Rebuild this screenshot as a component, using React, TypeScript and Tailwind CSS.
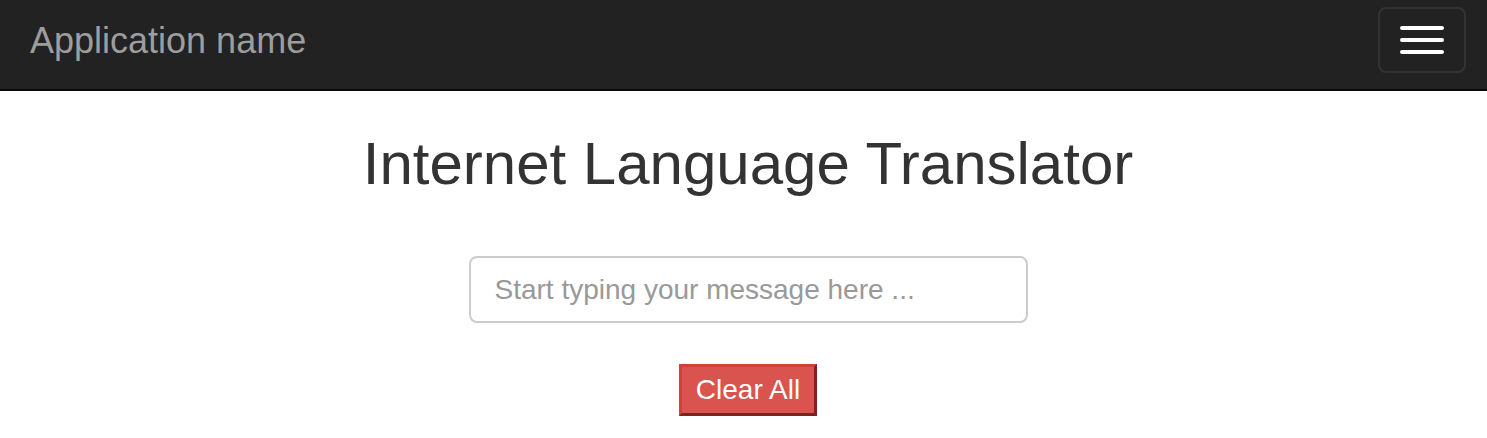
import React from "react";

export default function App() {
  return (
    <div className="min-h-[438px] bg-white" style={{ fontFamily: '"Liberation Sans", Arial, sans-serif' }}>
      <nav className="h-[91px] bg-[#222222] border-b-2 border-[#080808] flex items-start justify-between">
        <div className="pl-[30px] pt-[23px] text-[36px] leading-[36px] text-[#9d9d9d]">Application name</div>
        <button className="mt-[7px] mr-[21px] w-[88px] h-[66px] rounded-[8px] border-2 border-[#333333] flex flex-col items-center justify-center gap-[8px]">
          <span className="block w-[44px] h-[4px] rounded-[2px] bg-white" />
          <span className="block w-[44px] h-[4px] rounded-[2px] bg-white" />
          <span className="block w-[44px] h-[4px] rounded-[2px] bg-white" />
        </button>
      </nav>
      <div className="flex flex-col items-center pl-[9px]">
        <h1 className="mt-[40px] text-[60px] leading-[66px] text-[#333333] font-normal">Internet Language Translator</h1>
        <input
          className="mt-[59px] w-[559px] h-[67px] rounded-[8px] border-2 border-[#cccccc] px-[24px] text-[28px] text-[#555] placeholder:text-[#999999] outline-none"
          placeholder="Start typing your message here ..."
        />
        <button className="mt-[41px] w-[138px] h-[52px] bg-[#d9534f] text-white text-[28px] leading-none border-[3px] border-t-[#d43f3a] border-l-[#d43f3a] border-b-[#7f2321] border-r-[#7f2321] flex items-center justify-center">
          Clear All
        </button>
      </div>
    </div>
  );
}
